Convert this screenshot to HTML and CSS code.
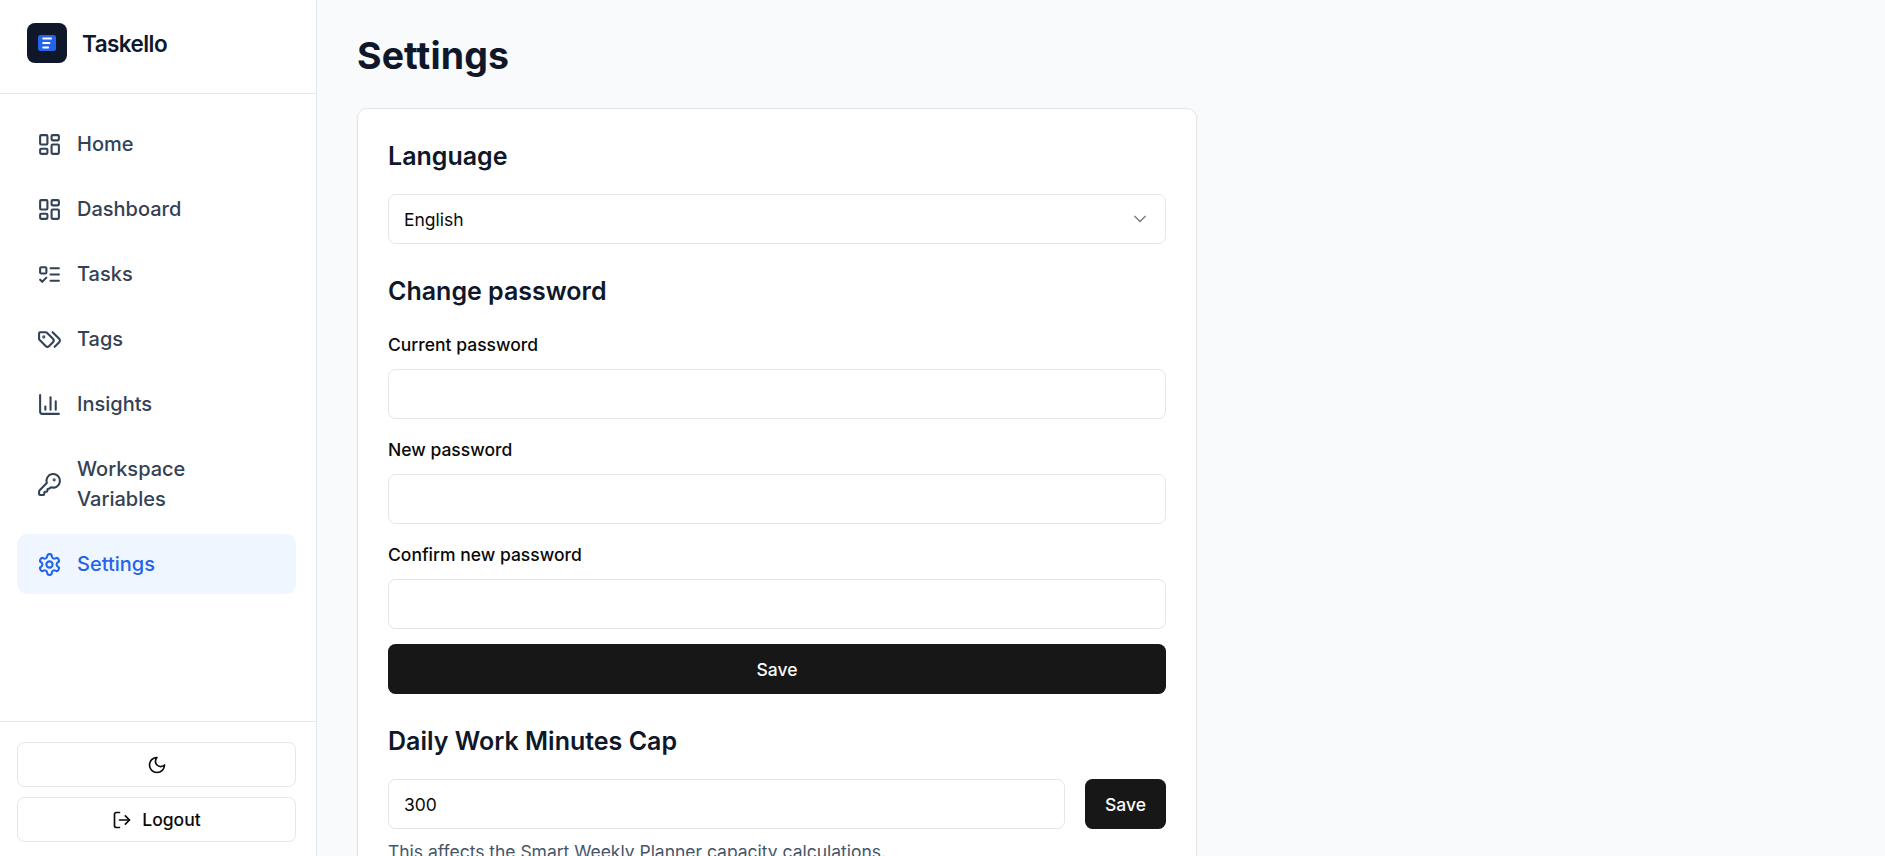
FILE: index.html
```html
<!DOCTYPE html>
<html lang="en">
<head>
    <meta charset="UTF-8">
    <meta name="viewport" content="width=device-width, initial-scale=1.0">
    <title>Settings - Taskello</title>
    <link rel="stylesheet" href="styles.css">
</head>
<body>
    <div class="layout">
        <aside class="sidebar">
            <div class="brand">
                <svg class="logo" viewBox="0 0 40 40">
                    <rect width="40" height="40" rx="8" fill="#0f172a"/>
                    <rect x="11" y="12" width="18" height="16" rx="2.5" fill="#2563eb"/>
                    <path d="M16.2 15.5h7.8M16.2 20h6.2M16.2 24.5h5" stroke="#fff" stroke-width="2" stroke-linecap="round"/>
                </svg>
                <span class="brand-name">Taskello</span>
            </div>

            <nav class="nav">
                <a class="nav-item" href="#">
                    <svg class="icon" viewBox="0 0 24 24"><rect width="7" height="9" x="3" y="3" rx="1"/><rect width="7" height="5" x="14" y="3" rx="1"/><rect width="7" height="9" x="14" y="12" rx="1"/><rect width="7" height="5" x="3" y="16" rx="1"/></svg>
                    <span>Home</span>
                </a>
                <a class="nav-item" href="#">
                    <svg class="icon" viewBox="0 0 24 24"><rect width="7" height="9" x="3" y="3" rx="1"/><rect width="7" height="5" x="14" y="3" rx="1"/><rect width="7" height="9" x="14" y="12" rx="1"/><rect width="7" height="5" x="3" y="16" rx="1"/></svg>
                    <span>Dashboard</span>
                </a>
                <a class="nav-item" href="#">
                    <svg class="icon" viewBox="0 0 24 24"><rect x="3" y="5" width="6" height="6" rx="1"/><path d="m3 17 2 2 4-4"/><path d="M13 6h8"/><path d="M13 12h8"/><path d="M13 18h8"/></svg>
                    <span>Tasks</span>
                </a>
                <a class="nav-item" href="#">
                    <svg class="icon" viewBox="0 0 24 24"><path d="m15 5 6.3 6.3a2.4 2.4 0 0 1 0 3.4L17 19"/><path d="M9.586 5.586A2 2 0 0 0 8.172 5H3a1 1 0 0 0-1 1v5.172a2 2 0 0 0 .586 1.414L8.29 18.29a2.426 2.426 0 0 0 3.42 0l3.58-3.58a2.426 2.426 0 0 0 0-3.42z"/><circle cx="6.5" cy="9.5" r=".5" fill="currentColor"/></svg>
                    <span>Tags</span>
                </a>
                <a class="nav-item" href="#">
                    <svg class="icon" viewBox="0 0 24 24"><path d="M3 3v16a2 2 0 0 0 2 2h16"/><path d="M13 17V5"/><path d="M18 17V9"/><path d="M8 17v-3"/></svg>
                    <span>Insights</span>
                </a>
                <a class="nav-item" href="#">
                    <svg class="icon" viewBox="0 0 24 24"><path d="M2.586 17.414A2 2 0 0 0 2 18.828V21a1 1 0 0 0 1 1h3a1 1 0 0 0 1-1v-1a1 1 0 0 1 1-1h1a1 1 0 0 0 1-1v-1a1 1 0 0 1 1-1h.172a2 2 0 0 0 1.414-.586l.814-.814a6.5 6.5 0 1 0-4-4z"/><circle cx="16.5" cy="7.5" r=".5" fill="currentColor"/></svg>
                    <span>Workspace Variables</span>
                </a>
                <a class="nav-item active" href="#">
                    <svg class="icon" viewBox="0 0 24 24"><path d="M12.22 2h-.44a2 2 0 0 0-2 2v.18a2 2 0 0 1-1 1.73l-.43.25a2 2 0 0 1-2 0l-.15-.08a2 2 0 0 0-2.73.73l-.22.38a2 2 0 0 0 .73 2.73l.15.1a2 2 0 0 1 1 1.72v.51a2 2 0 0 1-1 1.74l-.15.09a2 2 0 0 0-.73 2.73l.22.38a2 2 0 0 0 2.73.73l.15-.08a2 2 0 0 1 2 0l.43.25a2 2 0 0 1 1 1.73V20a2 2 0 0 0 2 2h.44a2 2 0 0 0 2-2v-.18a2 2 0 0 1 1-1.73l.43-.25a2 2 0 0 1 2 0l.15.08a2 2 0 0 0 2.73-.73l.22-.39a2 2 0 0 0-.73-2.73l-.15-.08a2 2 0 0 1-1-1.74v-.5a2 2 0 0 1 1-1.74l.15-.09a2 2 0 0 0 .73-2.73l-.22-.38a2 2 0 0 0-2.73-.73l-.15.08a2 2 0 0 1-2 0l-.43-.25a2 2 0 0 1-1-1.73V4a2 2 0 0 0-2-2z"/><circle cx="12" cy="12" r="3"/></svg>
                    <span>Settings</span>
                </a>
            </nav>

            <div class="sidebar-footer">
                <button class="btn-outline" type="button" aria-label="Toggle theme">
                    <svg class="icon icon-sm" viewBox="0 0 24 24"><path d="M12 3a6 6 0 0 0 9 9 9 9 0 1 1-9-9Z"/></svg>
                </button>
                <button class="btn-outline" type="button">
                    <svg class="icon icon-sm" viewBox="0 0 24 24"><path d="M9 21H5a2 2 0 0 1-2-2V5a2 2 0 0 1 2-2h4"/><path d="m16 17 5-5-5-5"/><path d="M21 12H9"/></svg>
                    Logout
                </button>
            </div>
        </aside>

        <main class="main">
            <h1>Settings</h1>
            <div class="card">
                <section>
                    <h2>Language</h2>
                    <button class="field select" type="button">
                        <span class="select-value">English</span>
                        <svg class="icon icon-sm chevron" viewBox="0 0 24 24"><path d="m6 9 6 6 6-6"/></svg>
                    </button>
                </section>

                <section>
                    <h2>Change password</h2>
                    <form class="password-form">
                        <div class="form-group">
                            <label for="current">Current password</label>
                            <input class="field" type="password" id="current">
                        </div>
                        <div class="form-group">
                            <label for="new">New password</label>
                            <input class="field" type="password" id="new">
                        </div>
                        <div class="form-group">
                            <label for="confirm">Confirm new password</label>
                            <input class="field" type="password" id="confirm">
                        </div>
                        <button class="btn" type="button">Save</button>
                    </form>
                </section>

                <section>
                    <h2>Daily Work Minutes Cap</h2>
                    <div class="cap-row">
                        <input class="field" type="text" value="300" aria-label="Minutes">
                        <button class="btn" type="button">Save</button>
                    </div>
                    <p class="hint">This affects the Smart Weekly Planner capacity calculations.</p>
                </section>
            </div>
        </main>
    </div>
</body>
</html>
```
FILE: styles.css
```css
* {
    box-sizing: border-box;
}
body {
    margin: 0;
    font-family: Inter, "Liberation Sans", sans-serif;
    font-size: 20px;
    line-height: 30px;
    color: #0a0a0a;
    background-color: #f8fafc;
}
h1, h2, p {
    margin: 0;
}
button, input {
    font: inherit;
    color: inherit;
}
.layout {
    display: flex;
    height: 100vh;
    overflow: hidden;
}

/* Sidebar */
.sidebar {
    display: flex;
    flex-direction: column;
    flex-shrink: 0;
    width: 317px;
    background-color: white;
    border-right: 1px solid #e2e8f0;
}
.brand {
    display: flex;
    align-items: center;
    gap: 15px;
    height: 94px;
    padding: 0 27px 7px;
    border-bottom: 1px solid #e2e8f0;
}
.logo {
    width: 40px;
    height: 40px;
}
.brand-name {
    padding-top: 2px;
    font-size: 22.5px;
    font-weight: 600;
    letter-spacing: -0.025em;
    color: #0f172a;
}
.nav {
    display: flex;
    flex-direction: column;
    flex: 1;
    gap: 5px;
    padding: 20px 20px 20px 17px;
}
.nav-item {
    display: flex;
    align-items: center;
    gap: 15px;
    padding: 15px 20px;
    border-radius: 10px;
    font-weight: 500;
    color: #334155;
    text-decoration: none;
}
.nav-item.active {
    color: #2563eb;
    background-color: #eff6ff;
}
.icon {
    flex-shrink: 0;
    width: 25px;
    height: 25px;
    fill: none;
    stroke: currentColor;
    stroke-width: 2;
    stroke-linecap: round;
    stroke-linejoin: round;
}
.icon-sm {
    width: 20px;
    height: 20px;
}
.sidebar-footer {
    display: flex;
    flex-direction: column;
    gap: 10px;
    padding: 20px 20px 14px 17px;
    border-top: 1px solid #e2e8f0;
}
.btn-outline {
    display: flex;
    align-items: center;
    justify-content: center;
    gap: 10px;
    height: 45px;
    border: 1px solid #e5e5e5;
    border-radius: 7.5px;
    font-size: 17.5px;
    font-weight: 500;
    background-color: white;
}

/* Content */
.main {
    flex: 1;
    padding: 33px 40px;
}
h1 {
    margin-bottom: 30px;
    font-size: 37.5px;
    line-height: 45px;
    font-weight: 700;
    letter-spacing: 0.1px;
    color: #0f172a;
}
.card {
    display: flex;
    flex-direction: column;
    gap: 30px;
    width: 840px;
    padding: 30px;
    border: 1px solid #e5e5e5;
    border-radius: 10px;
    background-color: white;
    box-shadow: 0 1px 2px rgba(0,0,0,0.05);
}
h2 {
    margin-bottom: 20px;
    font-size: 25px;
    line-height: 35px;
    font-weight: 600;
    color: #0f172a;
}
.field {
    display: block;
    width: 100%;
    height: 50px;
    padding: 0 15px;
    border: 1px solid #e5e5e5;
    border-radius: 7.5px;
    font-size: 17.5px;
    background-color: white;
}
.select {
    display: flex;
    align-items: center;
    justify-content: space-between;
}
.select-value {
    padding-top: 2px;
}
.chevron {
    opacity: 0.5;
}
.password-form {
    display: flex;
    flex-direction: column;
    gap: 15px;
}
.form-group {
    display: flex;
    flex-direction: column;
    gap: 9px;
}
label {
    padding-top: 1px;
    font-size: 17.5px;
    font-weight: 500;
}
.btn {
    height: 50px;
    padding: 2px 20px 0;
    border: none;
    border-radius: 7.5px;
    font-size: 17.5px;
    font-weight: 500;
    color: #fafafa;
    background-color: #171717;
}
.cap-row {
    display: flex;
    gap: 20px;
}
.hint {
    margin-top: 10px;
    font-size: 17.5px;
    line-height: 25px;
    letter-spacing: -0.02px;
    color: #475569;
}
```
